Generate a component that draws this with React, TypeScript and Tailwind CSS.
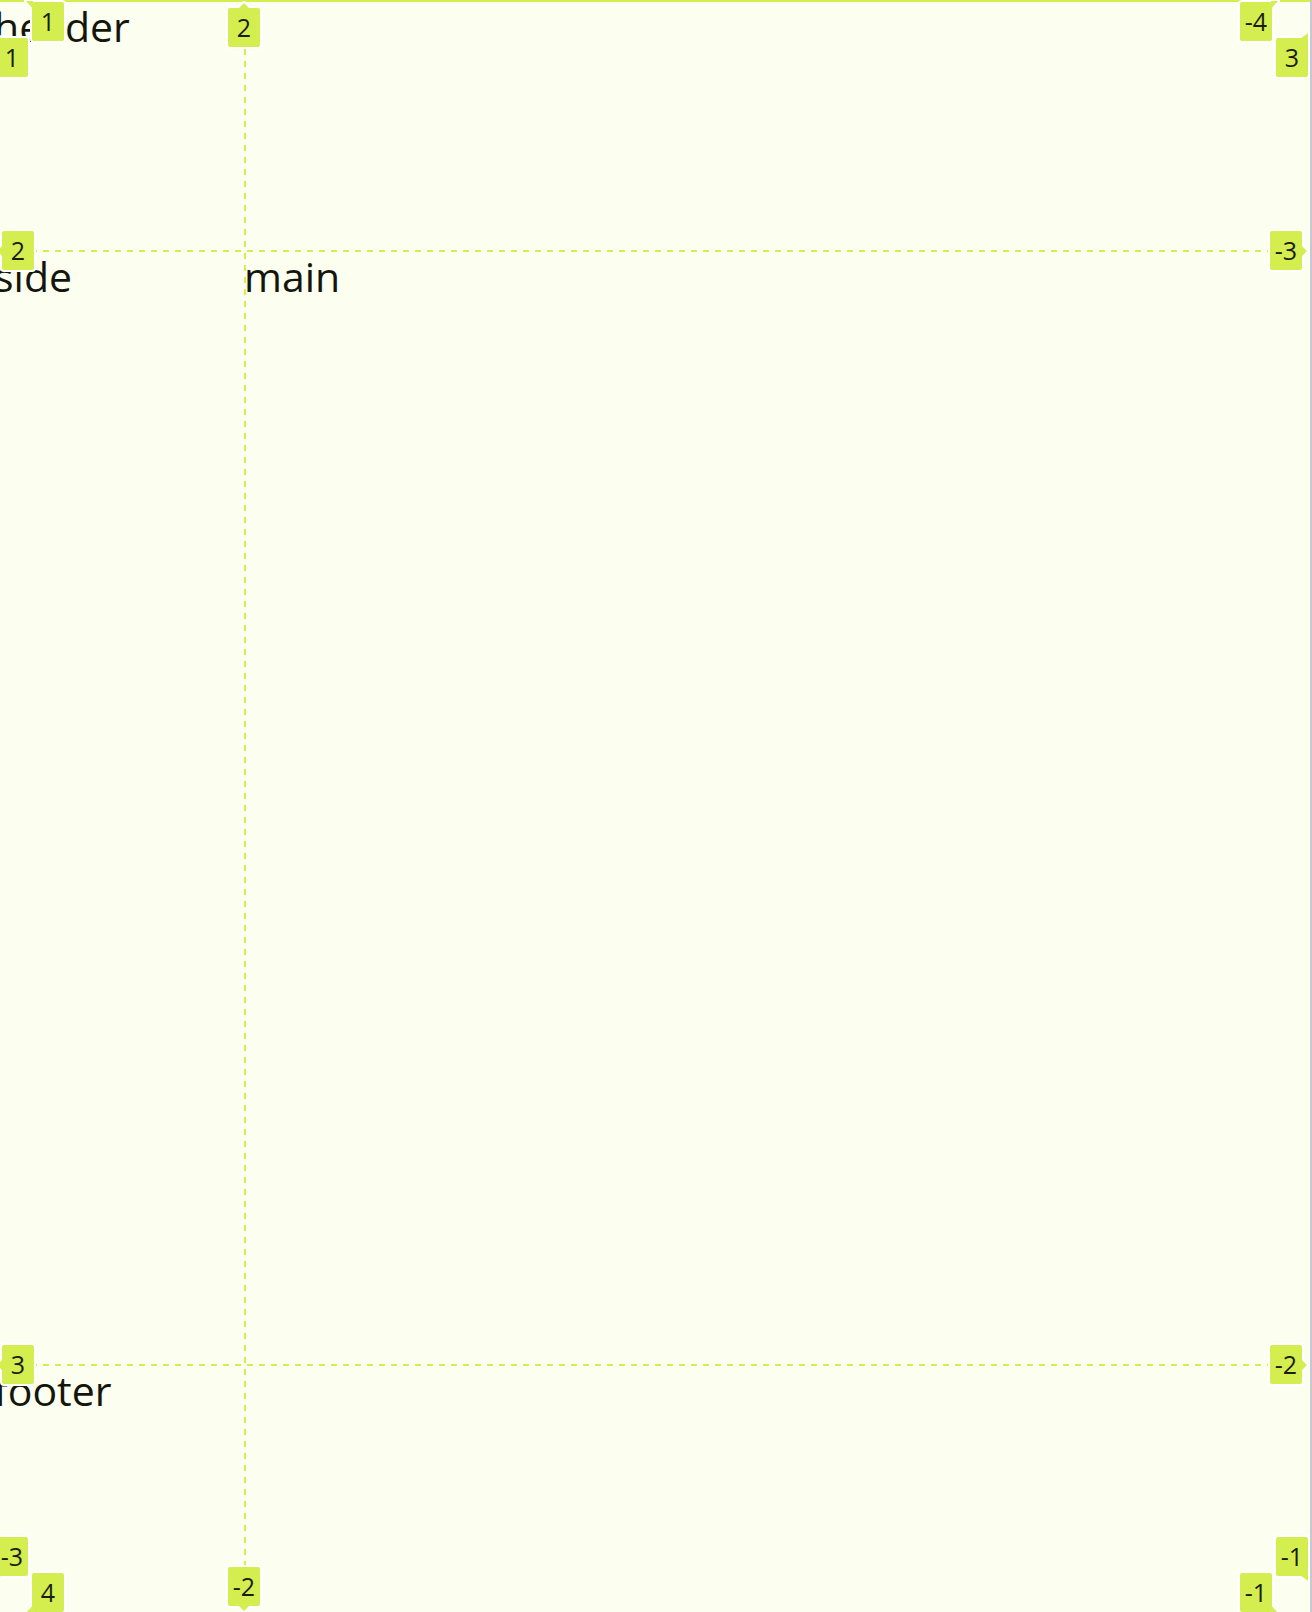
type Pointer = 'up' | 'down' | 'left' | 'right' | 'topLeft' | 'topRight' | 'rightTop' | 'rightBottom' | 'leftTop' | 'leftBottom' | 'bottomLeft' | 'bottomRight';

// Every outline runs clockwise so that it merges with the chip body.
const pointers: Record<Pointer, string> = {
  up: 'M10 1L16 -5L22 1Z',
  down: 'M10 38L22 38L16 44Z',
  left: 'M1 14L1 26L-5 20Z',
  right: 'M31 14L37 20L31 26Z',
  topLeft: 'M-6 -1L1 -1L1 7Z',
  topRight: 'M31 -1L38 -1L31 7Z',
  leftTop: 'M0 -4L6 1L0 1Z',
  rightTop: 'M32 -5L32 1L24 1Z',
  leftBottom: 'M0 43L0 38L6 38Z',
  rightBottom: 'M24 38L32 38L32 44Z',
  bottomLeft: 'M-6 40L1 32L1 40Z',
  bottomRight: 'M31 40L31 32L38 40Z',
};

const body = 'M2 0H30Q32 0 32 2V37Q32 39 30 39H2Q0 39 0 37V2Q0 0 2 0Z';

const chips: { label: string; pointer: Pointer; place: string }[] = [
  { label: '1', pointer: 'leftTop', place: '-left-1 top-[38px]' },
  { label: '1', pointer: 'topLeft', place: 'left-8 top-0.5' },
  { label: '2', pointer: 'up', place: 'left-[228px] top-2' },
  { label: '-4', pointer: 'topRight', place: 'right-[38px] top-0.5' },
  { label: '3', pointer: 'rightTop', place: 'right-0.5 top-[38px]' },
  { label: '2', pointer: 'left', place: 'left-0.5 top-[231px]' },
  { label: '-3', pointer: 'right', place: 'right-2 top-[231px]' },
  { label: '3', pointer: 'left', place: 'left-0.5 bottom-[228px]' },
  { label: '-2', pointer: 'right', place: 'right-2 bottom-[228px]' },
  { label: '-3', pointer: 'leftBottom', place: '-left-1 bottom-9' },
  { label: '4', pointer: 'bottomLeft', place: 'left-8 bottom-0' },
  { label: '-2', pointer: 'down', place: 'left-[228px] bottom-1.5' },
  { label: '-1', pointer: 'rightBottom', place: 'right-0.5 bottom-9' },
  { label: '-1', pointer: 'bottomRight', place: 'right-[38px] bottom-0' },
];

function LineChip({ label, pointer, place }: { label: string; pointer: Pointer; place: string }) {
  return (
    <span className={`absolute flex h-[39px] w-8 items-center justify-center pb-0.5 ${place}`}>
      <svg className="absolute inset-0 overflow-visible" width="32" height="39" viewBox="0 0 32 39" aria-hidden="true">
        <path d={`${pointers[pointer]} ${body}`} fill="#d4ee4f" stroke="#ffffff" strokeWidth="4" strokeLinejoin="round" paintOrder="stroke" />
      </svg>
      <span className="relative text-[25px] leading-9 text-[#1a1d12]">{label}</span>
    </span>
  );
}

export default function App() {
  return (
    <div className="relative min-h-screen overflow-hidden border-r-2 border-[#c8c8d2] bg-[#fcfeef] font-['Open_Sans','Noto_Sans',sans-serif]">
      <div className="-ml-1.5 grid min-h-screen grid-cols-[250px_1fr] grid-rows-[250px_1fr_248px] text-[41px] leading-[52px] text-[#14160c]">
        <header className="col-span-2">header</header>
        <aside>side</aside>
        <main>main</main>
        <footer className="col-span-2">footer</footer>
      </div>
      <div className="pointer-events-none absolute inset-0">
        <div className="absolute inset-x-0 top-0 h-0.5 bg-[#d4ee4f]" />
        <div className="absolute inset-x-0 top-[250px] h-0.5 bg-[repeating-linear-gradient(90deg,#d4ee4f_0_1px,transparent_1px_7px,#d4ee4f_7px_12px)]" />
        <div className="absolute inset-x-0 bottom-[246px] h-0.5 bg-[repeating-linear-gradient(90deg,#d4ee4f_0_1px,transparent_1px_7px,#d4ee4f_7px_12px)]" />
        <div className="absolute inset-y-0 left-[244px] w-0.5 bg-[repeating-linear-gradient(180deg,transparent_0_1px,#d4ee4f_1px_7px,transparent_7px_12px)]" />
        {chips.map((chip) => (
          <LineChip key={chip.place} {...chip} />
        ))}
      </div>
    </div>
  );
}
